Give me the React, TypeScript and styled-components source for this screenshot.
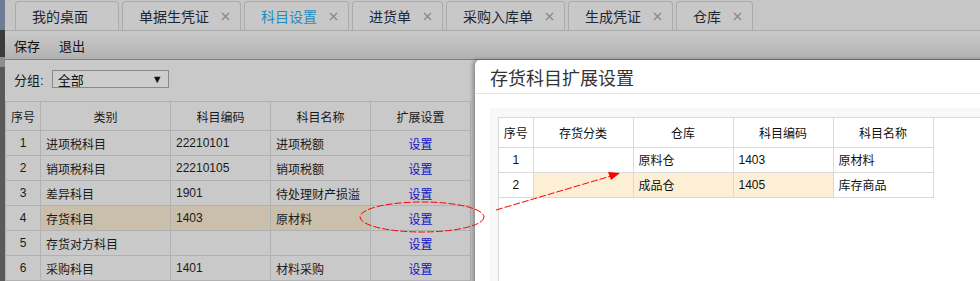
import { createGlobalStyle } from "styled-components";
import styled from "styled-components";

const GlobalStyle = createGlobalStyle`
  html, body {
    margin: 0;
    padding: 0;
    background: #c8c8c8;
    font-family: "Liberation Sans", "Noto Sans CJK SC", sans-serif;
    overflow: hidden;
  }
`;

interface ITab {
  label: string;
  closable: boolean;
  active?: boolean;
}

const tabs: ITab[] = [
  { label: "我的桌面", closable: false },
  { label: "单据生凭证", closable: true },
  { label: "科目设置", closable: true, active: true },
  { label: "进货单", closable: true },
  { label: "采购入库单", closable: true },
  { label: "生成凭证", closable: true },
  { label: "仓库", closable: true },
];

const subjects = [
  { no: "1", kind: "进项税科目", code: "22210101", name: "进项税额" },
  { no: "2", kind: "销项税科目", code: "22210105", name: "销项税额" },
  { no: "3", kind: "差异科目", code: "1901", name: "待处理财产损溢" },
  { no: "4", kind: "存货科目", code: "1403", name: "原材料", selected: true },
  { no: "5", kind: "存货对方科目", code: "", name: "" },
  { no: "6", kind: "采购科目", code: "1401", name: "材料采购" },
];

const stockRows = [
  { no: "1", category: "", store: "原料仓", code: "1403", name: "原材料" },
  { no: "2", category: "", store: "成品仓", code: "1405", name: "库存商品", selected: true },
];

const CloseIcon = () => (
  <svg width="9" height="9" viewBox="0 0 9 9">
    <path d="M1 1 L8 8 M8 1 L1 8" stroke="#878787" strokeWidth="1.3" />
  </svg>
);

export default function App() {
  return (
    <Page>
      <GlobalStyle />
      <SideStrip>
        <StripPart color="#6c7d95" size={30} />
        <StripPart color="#3b3b3b" size={27} />
        <StripPart color="#8c8c8c" size={10} />
        <StripPart color="#5a5a5a" size={214} />
      </SideStrip>
      <Main>
        <TabBar>
          {tabs.map((tab) => (
            <Tab key={tab.label} active={!!tab.active} closable={tab.closable}>
              <span>{tab.label}</span>
              {tab.closable && <CloseIcon />}
            </Tab>
          ))}
        </TabBar>
        <Toolbar>
          <ToolButton>保存</ToolButton>
          <ToolButton>退出</ToolButton>
        </Toolbar>
        <FilterRow>
          <FilterLabel>分组:</FilterLabel>
          <Select>
            <span>全部</span>
            <Caret>▼</Caret>
          </Select>
        </FilterRow>
        <SubjectTable>
          <colgroup>
            <col style={{ width: 35 }} />
            <col style={{ width: 130 }} />
            <col style={{ width: 100 }} />
            <col style={{ width: 100 }} />
            <col style={{ width: 100 }} />
          </colgroup>
          <thead>
            <tr>
              <HeadCell>序号</HeadCell>
              <HeadCell>类别</HeadCell>
              <HeadCell>科目编码</HeadCell>
              <HeadCell>科目名称</HeadCell>
              <HeadCell>扩展设置</HeadCell>
            </tr>
          </thead>
          <tbody>
            {subjects.map((row) => (
              <tr key={row.no}>
                <Cell center>{row.no}</Cell>
                <Cell highlight={row.selected}>{row.kind}</Cell>
                <Cell highlight={row.selected}>{row.code}</Cell>
                <Cell highlight={row.selected}>{row.name}</Cell>
                <Cell center>
                  <LinkText>设置</LinkText>
                </Cell>
              </tr>
            ))}
          </tbody>
        </SubjectTable>
      </Main>

      <Dialog>
        <DialogTitle>存货科目扩展设置</DialogTitle>
        <DialogBody>
          <GridPanel>
            <GridBox>
              <StockTable>
                <colgroup>
                  <col style={{ width: 34 }} />
                  <col style={{ width: 100 }} />
                  <col style={{ width: 100 }} />
                  <col style={{ width: 100 }} />
                  <col style={{ width: 100 }} />
                </colgroup>
                <thead>
                  <tr>
                    <StockHead>序号</StockHead>
                    <StockHead>存货分类</StockHead>
                    <StockHead>仓库</StockHead>
                    <StockHead>科目编码</StockHead>
                    <StockHead>科目名称</StockHead>
                  </tr>
                </thead>
                <tbody>
                  {stockRows.map((row) => (
                    <tr key={row.no}>
                      <StockCell center>{row.no}</StockCell>
                      <StockCell highlight={row.selected}>{row.category}</StockCell>
                      <StockCell highlight={row.selected}>{row.store}</StockCell>
                      <StockCell highlight={row.selected}>{row.code}</StockCell>
                      <StockCell>{row.name}</StockCell>
                    </tr>
                  ))}
                </tbody>
              </StockTable>
            </GridBox>
          </GridPanel>
        </DialogBody>
      </Dialog>

      <Annotation width="980" height="281" viewBox="0 0 980 281">
        <ellipse cx="422" cy="217" rx="62" ry="15" fill="none" stroke="#ff0000" strokeWidth="1" strokeDasharray="7 2" />
        <line x1="496" y1="210" x2="611" y2="176" stroke="#ff0000" strokeWidth="1" strokeDasharray="7 2" />
        <polygon points="620,173 608,172 611,180" fill="#ff0000" />
      </Annotation>
    </Page>
  );
}

const Page = styled.div`
  position: relative;
  display: flex;
  width: 980px;
  height: 281px;
  overflow: hidden;
  background: #c9c9c9;
`;

const SideStrip = styled.div`
  display: flex;
  flex-direction: column;
  width: 5px;
  flex-shrink: 0;
`;

const StripPart = styled.div<{ color: string; size: number }>`
  height: ${(p) => p.size}px;
  background: ${(p) => p.color};
`;

const Main = styled.div`
  display: flex;
  flex-direction: column;
  flex: 1;
`;

const TabBar = styled.div`
  display: flex;
  align-items: flex-end;
  gap: 3px;
  height: 30px;
  padding-left: 10px;
  background: #c6c6c6;
  border-bottom: 1px solid #a9a9a9;
`;

const Tab = styled.div<{ active: boolean; closable: boolean }>`
  display: flex;
  align-items: center;
  gap: 12px;
  height: 28px;
  padding: 0 ${(p) => (p.closable ? 10 : 30)}px 0 16px;
  border: 1px solid #ababab;
  border-bottom: none;
  border-radius: 4px 4px 0 0;
  background: #c8c8c8;
  font-size: 14px;
  color: ${(p) => (p.active ? "#1e8cc4" : "#1d2633")};
  white-space: nowrap;
`;

const Toolbar = styled.div`
  display: flex;
  align-items: center;
  gap: 19px;
  height: 28px;
  padding-left: 9px;
  background: linear-gradient(#c9c9c9, #bdbdbd 55%, #b1b1b1);
  border-bottom: 1px solid #7e7e7e;
`;

const ToolButton = styled.span`
  font-size: 13px;
  color: #111;
`;

const FilterRow = styled.div`
  display: flex;
  align-items: center;
  gap: 8px;
  height: 18px;
  padding: 10px 0 13px 9px;
`;

const FilterLabel = styled.span`
  font-size: 13px;
  color: #1a1a1a;
`;

const Select = styled.div`
  display: flex;
  align-items: center;
  justify-content: space-between;
  box-sizing: border-box;
  width: 117px;
  height: 18px;
  padding: 0 5px 0 5px;
  border: 1px solid #8a8a8a;
  background: #cdcdcd;
  font-size: 13px;
  color: #111;
`;

const Caret = styled.span`
  font-size: 11px;
  color: #111;
`;

const SubjectTable = styled.table`
  border-collapse: collapse;
  table-layout: fixed;
  width: 465px;
  font-size: 12px;
  color: #1a1a1a;

  thead tr {
    height: 29px;
  }
  tbody tr {
    height: 25px;
  }
`;

const HeadCell = styled.th`
  font-weight: normal;
  text-align: center;
  padding: 0;
  border: 1px solid #b1b1b1;
`;

const Cell = styled.td<{ center?: boolean; highlight?: boolean }>`
  padding: 0 5px;
  text-align: ${(p) => (p.center ? "center" : "left")};
  background: ${(p) => (p.highlight ? "#c9bfab" : "transparent")};
  border: 1px solid #b1b1b1;
  white-space: nowrap;
  overflow: hidden;
`;

const LinkText = styled.span`
  color: #1212c6;
`;

const Dialog = styled.div`
  position: absolute;
  left: 475px;
  top: 60px;
  right: -20px;
  bottom: -20px;
  display: flex;
  flex-direction: column;
  background: #fff;
  border-radius: 5px 0 0 0;
  box-shadow: -2px 0 4px rgba(0, 0, 0, 0.35);
`;

const DialogTitle = styled.div`
  display: flex;
  align-items: center;
  height: 33px;
  padding-left: 15px;
  border-bottom: 1px solid #e5e5e5;
  font-size: 18px;
  color: #333;
`;

const DialogBody = styled.div`
  display: flex;
  flex: 1;
  padding: 14px 0 0 15px;
`;

const GridPanel = styled.div`
  display: flex;
  flex: 1;
  padding: 9px 0 0 8px;
  background: #f8f8f8;
`;

const GridBox = styled.div`
  flex: 1;
  background: #fff;
  border-top: 1px solid #dadada;
  border-left: 1px solid #dadada;
`;

const StockTable = styled.table`
  border-collapse: collapse;
  table-layout: fixed;
  width: 434px;
  font-size: 12px;
  color: #111;

  thead tr {
    height: 29px;
  }
  tbody tr {
    height: 25px;
  }
`;

const StockHead = styled.th`
  font-weight: normal;
  text-align: center;
  padding: 0;
  border-right: 1px solid #dadada;
  border-bottom: 1px solid #dadada;
`;

const StockCell = styled.td<{ center?: boolean; highlight?: boolean }>`
  padding: 0 5px;
  text-align: ${(p) => (p.center ? "center" : "left")};
  background: ${(p) => (p.highlight ? "#fdefd6" : "#fff")};
  border-right: 1px solid #dadada;
  border-bottom: 1px solid #dadada;
  white-space: nowrap;
`;

const Annotation = styled.svg`
  position: absolute;
  left: 0;
  top: 0;
  pointer-events: none;
`;
